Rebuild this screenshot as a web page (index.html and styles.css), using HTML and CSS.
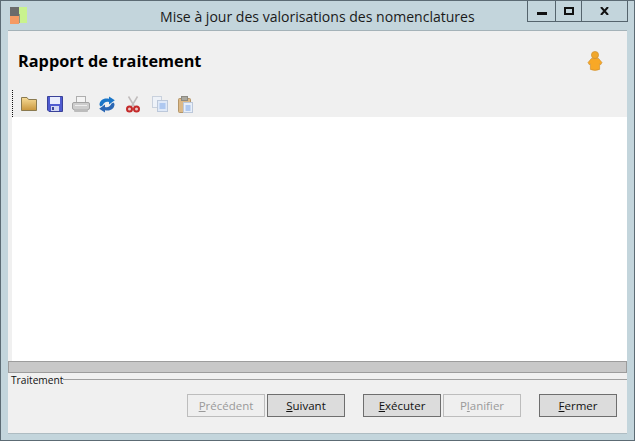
FILE: index.html
```html
<!DOCTYPE html>
<html lang="fr">
<head>
<meta charset="utf-8">
<title>Mise à jour des valorisations des nomenclatures</title>
<link rel="stylesheet" href="styles.css">
</head>
<body>
<div class="window">
  <div class="titlebar">
    <svg class="app-icon" width="17" height="17" viewBox="0 0 17 17">
      <rect x="0" y="0" width="9" height="9" fill="#6b6b6b"/>
      <rect x="0" y="9" width="9" height="8" fill="#f59a63"/>
      <rect x="9" y="0" width="8" height="16" fill="#c9f28e"/>
      <rect x="9" y="7" width="1" height="9" fill="#8f9a80"/>
    </svg>
    <div class="title">Mise à jour des valorisations des nomenclatures</div>
    <div class="controls">
      <div class="ctl ctl-min"><span class="glyph-min"></span></div>
      <div class="ctl ctl-max"><span class="glyph-max"></span></div>
      <div class="ctl ctl-close">
        <svg width="9" height="8" viewBox="0 0 9 8"><path d="M1 0L8 8M8 0L1 8" stroke="#111" stroke-width="2" fill="none"/></svg>
      </div>
    </div>
  </div>
  <div class="client">
    <div class="header">
      <h1 class="heading">Rapport de traitement</h1>
      <svg class="user" width="16" height="20" viewBox="0 0 16 20">
        <circle cx="8" cy="4" r="3.6" fill="#f0a72c" stroke="#c98a2a" stroke-width=".6"/>
        <path d="M4.4 7.5H11.6L15 11.6 13.6 13.8 12.6 12.8V18.4Q8 20.4 3.4 18.4V12.8L2.4 13.8 1 11.6Z" fill="#f8a826" stroke="#c98a2a" stroke-width=".6"/>
      </svg>
    </div>
    <div class="toolbar">
      <div class="grip"></div>
      <div class="tools">
        <svg class="tool" width="16" height="16" viewBox="0 0 16 16">
          <defs><linearGradient id="f" x1="0" y1="0" x2="0" y2="1"><stop offset="0" stop-color="#f7dc98"/><stop offset="1" stop-color="#c9963c"/></linearGradient></defs>
          <path d="M.5 14.5V1.5H6L7.5 3.5H15.5V14.5Z" fill="url(#f)" stroke="#8a7a50"/>
        </svg>
        <svg class="tool tool-save" width="16" height="16" viewBox="0 0 16 16">
          <path d="M.5.5H15.5V15.5H2L.5 14Z" fill="#4f5bd0" stroke="#3a4299"/>
          <rect x="3" y="1" width="10" height="7" fill="#e8ecfc"/>
          <rect x="4" y="10" width="8" height="5" fill="#d2d7f2"/>
          <rect x="5" y="11" width="2" height="3" fill="#3b4599"/>
        </svg>
        <svg class="tool tool-print" width="18" height="17" viewBox="0 0 18 17">
          <rect x="4.5" y=".5" width="9" height="6" fill="#f4f4f4" stroke="#aeaeae"/>
          <rect x=".5" y="6.5" width="17" height="7" rx="1.5" fill="#cdcdcd" stroke="#a2a2a2"/>
          <rect x="2" y="13" width="14" height="3" rx="1" fill="#bcbcbc"/>
          <rect x="3" y="9" width="12" height="1" fill="#eee"/>
        </svg>
        <svg class="tool" width="16" height="17" viewBox="0 0 16 17">
          <path d="M.5 9C.5 4 5 1.5 10 2.8V.5L15.8 4.2 10 8.5V6C7 5.2 4.8 6.5 3.5 9.5L1.5 10.5Z" fill="#1b76c8"/>
          <path d="M15.5 8C15.5 13 11 15.5 6 14.2V16.5L.2 12.8 6 8.5V11C9 11.8 11.2 10.5 12.5 7.5L14.5 6.5Z" fill="#2b67b4"/>
        </svg>
        <svg class="tool tool-cut" width="14" height="17" viewBox="0 0 14 17">
          <path d="M2.5 .5L8.5 10.5M11.5 .5L5.5 10.5" stroke="#c0bcbc" stroke-width="1.5" fill="none"/>
          <circle cx="3.5" cy="13" r="2.5" fill="#e8c8c8" stroke="#c42a2a" stroke-width="2"/>
          <circle cx="10.5" cy="13" r="2.5" fill="#e8c8c8" stroke="#c42a2a" stroke-width="2"/>
        </svg>
        <svg class="tool" width="16" height="16" viewBox="0 0 16 16">
          <rect x=".5" y=".5" width="9" height="11" fill="#eef2f8" stroke="#c9d1dd"/>
          <rect x="5.5" y="4.5" width="10" height="11" fill="#dfe9f8" stroke="#bcc8da"/>
          <rect x="7.5" y="7" width="6" height="6" fill="#aec8f0"/>
        </svg>
        <svg class="tool" width="15" height="17" viewBox="0 0 15 17">
          <rect x=".5" y="2.5" width="12" height="14" rx="1" fill="#dcb987" stroke="#b39569"/>
          <rect x="3.5" y=".5" width="6" height="4" fill="#aaa89f" stroke="#8c8a82"/>
          <rect x="5.5" y="6.5" width="9" height="10" fill="#e8eff9" stroke="#bcc8da"/>
          <rect x="7.5" y="9" width="5" height="6" fill="#aec8f0"/>
        </svg>
      </div>
    </div>
    <div class="report"></div>
    <div class="progress"></div>
    <div class="group">
      <span class="group-label">Traitement</span>
      <span class="group-line"></span>
    </div>
    <div class="actions">
      <button class="btn" disabled><u>P</u>récédent</button>
      <button class="btn"><u>S</u>uivant</button>
      <button class="btn btn-run"><u>E</u>xécuter</button>
      <button class="btn" disabled>P<u>l</u>anifier</button>
      <button class="btn btn-close"><u>F</u>ermer</button>
    </div>
  </div>
</div>
</body>
</html>
```

FILE: styles.css
```css
* { box-sizing: border-box; }
html, body { margin: 0; padding: 0; }
body { width: 635px; height: 441px; overflow: hidden; font-family: "Open Sans", "Noto Sans", sans-serif; }
.window {
  width: 635px; height: 441px;
  display: flex; flex-direction: column;
  background: #c3d5dc;
  border: 1px solid #5c6b74;
  padding: 0 7px 6px 7px;
}
.titlebar { height: 29px; flex: none; display: flex; align-items: flex-start; }
.app-icon { margin: 6px 0 0 2px; flex: none; }
.title {
  flex: none; width: 317px; margin: 6px 0 0 133px;
  font-size: 14.05px; line-height: 20px; color: #1a1a1a; white-space: nowrap;
}
.controls { display: flex; margin-left: auto; height: 21px; margin-right: -1px; border: 1px solid #55646d; border-top: none; }
.ctl { display: flex; align-items: center; justify-content: center; height: 20px; }
.ctl-min { width: 28px; border-right: 1px solid #55646d; }
.ctl-max { width: 26px; border-right: 1px solid #55646d; }
.ctl-close { width: 45px; }
.glyph-min { width: 10px; height: 3px; background: #111; margin-top: 5px; }
.glyph-max { width: 10px; height: 8px; border: 2px solid #111; }
.client {
  flex: 1; display: flex; flex-direction: column;
  background: #f0f0f0; border-top: 1px solid #a4b2b8; border-bottom: 1px solid #aebcc2;
}
.header { height: 59px; flex: none; display: flex; align-items: center; justify-content: space-between; padding: 0 24px 0 10px; }
.heading { margin: 0; font-family: "Open Sans", sans-serif; font-size: 16.3px; font-weight: 700; color: #000; }
.toolbar { height: 27px; flex: none; display: flex; align-items: flex-start; padding-left: 4px; }
.grip { width: 1px; height: 27px; border-left: 1px dotted #111; flex: none; }
.tools { display: flex; align-items: center; margin: 5px 0 0 8px; height: 18px; }
.tool { flex: none; margin-right: 10px; }
.tool-save { margin-right: 9px; }
.tool-print { margin-right: 9px; }
.tool-cut { margin: 0 12px 0 1px; }
.report { height: 244px; flex: none; background: #fff; margin-left: 4px; }
.progress { height: 12px; flex: none; background: #c8c8c8; border: 1px solid #9c9c9c; }
.group { flex: none; display: flex; align-items: center; height: 14px; padding-left: 3px; }
.group-label { font-size: 10.2px; line-height: 14px; color: #111; }
.group-line { flex: 1; height: 1px; background: #a0a0a0; margin-top: -2px; }
.actions { display: flex; padding: 7px 10px 0 179px; gap: 2px; }
.btn {
  flex: none; width: 78px; height: 23px; padding: 0; font: inherit; font-size: 11.5px; line-height: 20px;
  background: #dcdcdc; color: #111; border: 1px solid #6e6e6e; border-radius: 0;
}
.btn:disabled { background: #efefef; color: #9a9a9a; border-color: #bdbdbd; }
.btn-run { margin-left: 16px; }
.btn-close { margin-left: 16px; }
```
